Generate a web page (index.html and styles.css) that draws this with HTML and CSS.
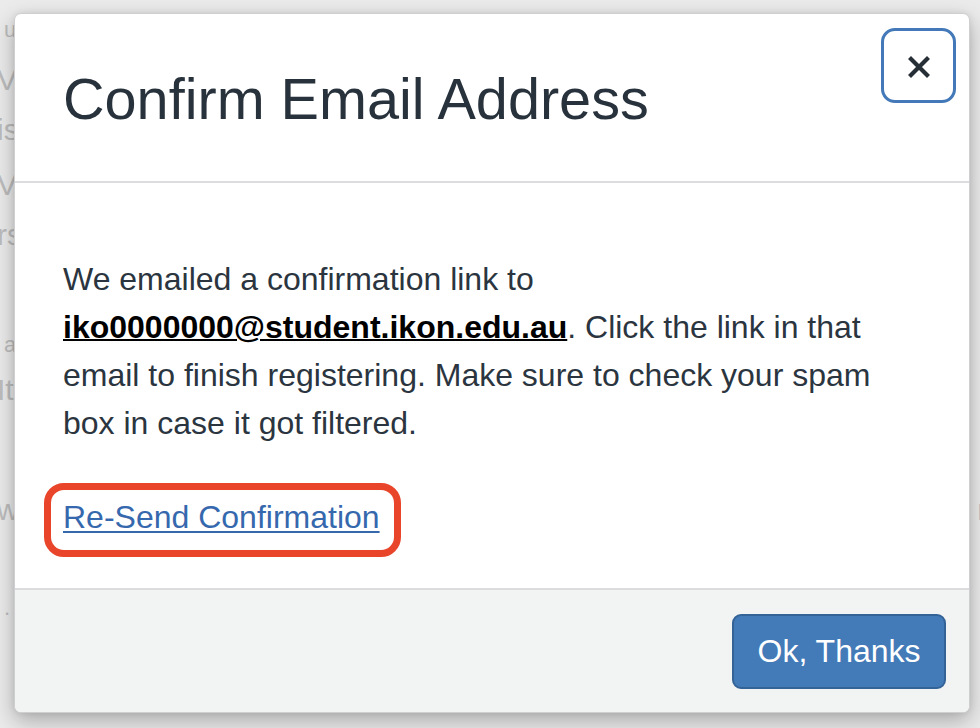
FILE: index.html
```html
<!DOCTYPE html>
<html lang="en">
<head>
<meta charset="utf-8">
<title>Confirm Email Address</title>
<link rel="stylesheet" href="styles.css">
</head>
<body>
  <div class="page">
    <div class="page-lines">
      <span class="frag frag-sm">u</span>
      <span class="frag">V</span>
      <span class="frag">is</span>
      <span class="frag">V</span>
      <span class="frag">rs</span>
      <span class="frag frag-sm">a</span>
      <span class="frag">It</span>
      <span class="frag">w</span>
      <span class="frag frag-sm">.</span>
    </div>
    <div class="page-right">n</div>
  </div>

  <div class="modal" role="dialog" aria-labelledby="modal-title">
    <div class="modal-header">
      <h3 class="modal-title" id="modal-title">Confirm Email Address</h3>
      <button class="close" type="button" aria-label="Close">
        <svg width="22" height="22" viewBox="0 0 22 22" aria-hidden="true">
          <path d="M3 3 L19 19 M19 3 L3 19" stroke="#262e36" stroke-width="4.2" stroke-linecap="square" fill="none"/>
        </svg>
      </button>
    </div>
    <div class="modal-body">
      <p class="message">We emailed a confirmation link to <a class="email" href="#">iko0000000@student.ikon.edu.au</a>. Click the link in that email to finish registering. Make sure to check your spam box in case it got filtered.</p>
      <span class="resend-wrap"><a class="resend" href="#">Re-Send Confirmation</a></span>
    </div>
    <div class="modal-footer">
      <button class="btn-primary" type="button">Ok, Thanks</button>
    </div>
  </div>
</body>
</html>
```

FILE: styles.css
```css
* {
  box-sizing: border-box;
}

html, body {
  margin: 0;
  height: 100%;
}

body {
  position: relative;
  overflow: hidden;
  background: #ebebeb;
  font-family: "Liberation Sans", Arial, Helvetica, sans-serif;
  color: #2b3540;
}

/* dimmed page behind the dialog */
.page {
  height: 100%;
  display: flex;
  justify-content: space-between;
  color: #bdbdbd;
}

.page-lines {
  display: grid;
  grid-template-rows: 50px 50px 55px 50px 110px 45px 120px 98px 40px;
  padding-top: 10px;
  font-size: 30px;
}

.frag {
  align-self: start;
  height: 40px;
  line-height: 40px;
  margin-left: -3px;
  white-space: nowrap;
}

.frag-sm {
  margin-left: 4px;
  font-size: 22px;
}

.page-right {
  padding-top: 490px;
  font-size: 30px;
  line-height: 40px;
  margin-right: -14px;
}

/* dialog */
.modal {
  position: absolute;
  left: 14px;
  top: 13px;
  width: 956px;
  height: 700px;
  display: flex;
  flex-direction: column;
  background: #fff;
  border: 1px solid #cfcfd1;
  border-radius: 7px;
  box-shadow: 0 8px 22px rgba(0, 0, 0, 0.28), 0 0 6px rgba(0, 0, 0, 0.08);
}

.modal-header {
  position: relative;
  padding: 54px 48px 50px;
  border-bottom: 2px solid #dcdcdf;
}

.modal-title {
  margin: 0;
  font-size: 57.6px;
  font-weight: 400;
  line-height: 63px;
  color: #28323c;
}

.close {
  position: absolute;
  top: 14px;
  right: 13px;
  width: 75px;
  height: 75px;
  display: flex;
  align-items: center;
  justify-content: center;
  padding: 0;
  background: #fff;
  border: 3px solid #4379b8;
  border-radius: 14px;
}

.close svg {
  display: block;
  margin-top: 2px;
}

.modal-body {
  flex: 1;
  padding: 72px 48px 47px;
  font-size: 32px;
  line-height: 48px;
}

.message {
  margin: 0 0 46px;
}

.email {
  color: #000;
  font-weight: 700;
  text-decoration: underline;
  text-decoration-thickness: 2px;
}

.resend-wrap {
  position: relative;
  display: inline-block;
  line-height: 48px;
}

/* highlight ring drawn around the resend link */
.resend-wrap::after {
  content: "";
  position: absolute;
  top: -10px;
  bottom: -16px;
  left: -19px;
  right: -21px;
  border: 7px solid #e9452b;
  border-radius: 20px;
  pointer-events: none;
}

.resend {
  color: #3668ae;
  text-decoration: underline;
  text-decoration-thickness: 2px;
  text-underline-offset: 3px;
}

.modal-footer {
  display: flex;
  justify-content: flex-end;
  padding: 24px 23px 23px;
  background: #f2f3f3;
  border-top: 2px solid #dcdcdf;
  border-radius: 0 0 6px 6px;
}

.btn-primary {
  width: 214px;
  height: 75px;
  padding: 0;
  font-family: inherit;
  font-size: 32px;
  line-height: 47px;
  white-space: nowrap;
  text-align: center;
  color: #fff;
  background: #437ab8;
  border: 2px solid #346497;
  border-radius: 9px;
}
```
